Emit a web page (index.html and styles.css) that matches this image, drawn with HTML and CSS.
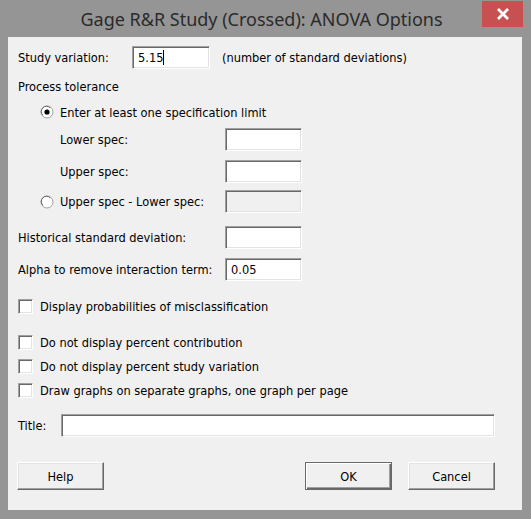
FILE: index.html
```html
<!DOCTYPE html>
<html>
<head>
<meta charset="utf-8">
<link rel="stylesheet" href="styles.css">
</head>
<body>
<div class="window">
  <div class="titlebar">
    <div class="title">Gage R&amp;R Study (Crossed): ANOVA Options</div>
    <div class="close">
      <svg width="14" height="12" viewBox="0 0 14 12"><path d="M2 1 L12 11 M12 1 L2 11" stroke="#fff" stroke-width="2.8" fill="none"/></svg>
    </div>
  </div>
  <div class="content">
    <div class="row r-study">
      <span class="lbl w-study">Study variation:</span>
      <span class="box w-study-box">5.15<span class="caret"></span></span>
      <span class="note">(number of standard deviations)</span>
    </div>
    <div class="row r-proc"><span class="lbl">Process tolerance</span></div>
    <div class="row r-radio1 indent">
      <span class="radio"><svg width="14" height="14" viewBox="0 0 14 14"><circle cx="7" cy="7" r="6" fill="#fff" stroke="#a0a0a0"/><path d="M2.8 10.2 A5 5 0 0 1 10.2 2.8" stroke="#696969" fill="none"/><circle cx="7" cy="7" r="2.6" fill="#000"/></svg></span>
      <span class="lbl">Enter at least one specification limit</span>
    </div>
    <div class="row r-lower sub">
      <span class="lbl w-sub">Lower spec:</span>
      <span class="box w-box"></span>
    </div>
    <div class="row r-upper sub">
      <span class="lbl w-sub">Upper spec:</span>
      <span class="box w-box"></span>
    </div>
    <div class="row r-radio2 indent">
      <span class="radio"><svg width="14" height="14" viewBox="0 0 14 14"><circle cx="7" cy="7" r="6" fill="#fff" stroke="#a0a0a0"/><path d="M2.8 10.2 A5 5 0 0 1 10.2 2.8" stroke="#696969" fill="none"/></svg></span>
      <span class="lbl w-sub">Upper spec - Lower spec:</span>
      <span class="box w-box disabled"></span>
    </div>
    <div class="row r-hist">
      <span class="lbl w-main">Historical standard deviation:</span>
      <span class="box w-box"></span>
    </div>
    <div class="row r-alpha">
      <span class="lbl w-main">Alpha to remove interaction term:</span>
      <span class="box w-box">0.05</span>
    </div>
    <div class="row r-cb1"><span class="check"></span><span class="lbl">Display probabilities of misclassification</span></div>
    <div class="row r-cb2"><span class="check"></span><span class="lbl">Do not display percent contribution</span></div>
    <div class="row r-cb3"><span class="check"></span><span class="lbl">Do not display percent study variation</span></div>
    <div class="row r-cb4"><span class="check"></span><span class="lbl">Draw graphs on separate graphs, one graph per page</span></div>
    <div class="row r-title">
      <span class="lbl w-title">Title:</span>
      <span class="box w-title-box"></span>
    </div>
    <div class="row r-buttons">
      <span class="btn">Help</span>
      <span class="spacer"></span>
      <span class="btn default">OK</span>
      <span class="btn">Cancel</span>
    </div>
  </div>
</div>
</body>
</html>
```
FILE: styles.css
```css
html, body {
  margin: 0;
  padding: 0;
  background: #959595;
}
.window {
  width: 531px;
  height: 519px;
  box-sizing: border-box;
  background: #959595;
  padding: 0 9px 9px 8px;
  display: flex;
  flex-direction: column;
}
.titlebar {
  height: 37px;
  display: flex;
  align-items: flex-start;
  flex: none;
}
.title {
  flex: 1;
  text-align: center;
  padding-left: 33px;
  line-height: 38px;
  font-family: "Noto Sans", "Open Sans", sans-serif;
  font-size: 18px;
  color: #2b2b2b;
  white-space: nowrap;
}
.close {
  width: 41px;
  height: 26px;
  margin-top: 1px;
  margin-right: -1px;
  background: #c75050;
  display: flex;
  align-items: center;
  justify-content: center;
}
.close svg { display: block; }
.content {
  flex: 1;
  background: #f0f0f0;
  padding: 0 10px 0 10px;
  font-family: "DejaVu Sans Condensed", "DejaVu Sans", sans-serif;
  font-size: 12.7px;
  color: #000;
  display: flex;
  flex-direction: column;
}
.row {
  display: flex;
  align-items: center;
  flex: none;
  white-space: nowrap;
}
.lbl { display: block; }
.box {
  display: flex;
  align-items: center;
  box-sizing: border-box;
  height: 23px;
  background: #fff;
  border: 1px solid;
  border-color: #a0a0a0 #fff #fff #a0a0a0;
  box-shadow: inset 1px 1px #696969, inset -1px -1px #e3e3e3;
  padding-left: 5px;
}
.box.disabled { background: #f0f0f0; }
.caret {
  display: inline-block;
  width: 1px;
  height: 15px;
  background: #000;
}
.check {
  display: block;
  box-sizing: border-box;
  width: 15px;
  height: 15px;
  background: #fff;
  border: 1px solid;
  border-color: #a0a0a0 #fff #fff #a0a0a0;
  box-shadow: inset 1px 1px #696969, inset -1px -1px #e3e3e3;
  margin-right: 7px;
}
.radio {
  display: block;
  width: 14px;
  height: 14px;
  margin-right: 6px;
}
.radio svg { display: block; }
.indent { padding-left: 22px; }
.sub { padding-left: 42px; }

.w-study { width: 114px; }
.w-study-box { width: 78px; }
.note { margin-left: 12px; }
.w-sub { width: 165px; }
.w-main { width: 207px; }
.w-box { width: 77px; }
.w-title { width: 43px; }
.w-title-box { width: 434px; }

.r-study { margin-top: 9px; height: 23px; }
.r-proc { margin-top: 9px; height: 16px; }
.r-radio1 { margin-top: 10px; height: 16px; }
.r-lower { margin-top: 8px; height: 23px; }
.r-upper { margin-top: 9px; height: 23px; }
.r-radio2 { margin-top: 7px; height: 23px; }
.r-hist { margin-top: 13px; height: 23px; }
.r-alpha { margin-top: 9px; height: 23px; }
.r-cb1 { margin-top: 18px; height: 15px; }
.r-cb2 { margin-top: 21px; height: 15px; }
.r-cb3 { margin-top: 9px; height: 15px; }
.r-cb4 { margin-top: 9px; height: 15px; }
.r-title { margin-top: 16px; height: 23px; }
.r-buttons { margin-top: 25px; height: 28px; margin-right: 17px; }

.btn {
  display: flex;
  align-items: center;
  justify-content: center;
  box-sizing: border-box;
  width: 87px;
  height: 28px;
  background: #f0f0f0;
  border: 1px solid;
  border-color: #fff #696969 #696969 #fff;
  box-shadow: inset -1px -1px #a0a0a0, inset 1px 1px #e3e3e3;
}
.btn.default {
  border-color: #696969;
  box-shadow: inset 1px 1px #fff, inset -1px -1px #696969, inset -2px -2px #a0a0a0;
  margin-right: 16px;
}
.r-buttons .btn:first-child { margin-left: -1px; }
.spacer { flex: 1; }
```
